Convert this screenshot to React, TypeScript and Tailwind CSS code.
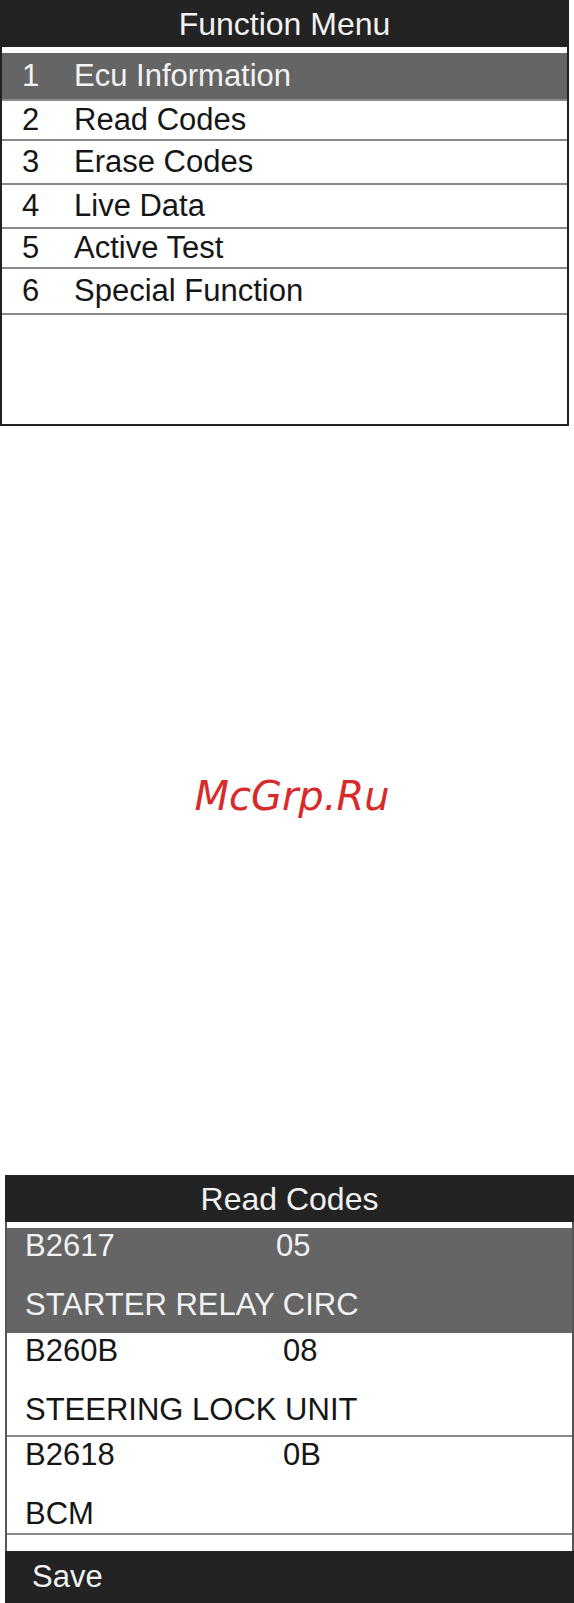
import React from 'react'

const menuItems = [
  { no: '1', label: 'Ecu Information', h: 'h-[46px]' },
  { no: '2', label: 'Read Codes', h: 'h-[40px]' },
  { no: '3', label: 'Erase Codes', h: 'h-[44px]' },
  { no: '4', label: 'Live Data', h: 'h-[44px]' },
  { no: '5', label: 'Active Test', h: 'h-[40px]' },
  { no: '6', label: 'Special Function', h: 'h-[46px]' },
]

const codes = [
  { code: 'B2617', status: '05', desc: 'STARTER RELAY CIRC', h: 'h-[105px]', statusPos: 'w-[251px]' },
  { code: 'B260B', status: '08', desc: 'STEERING LOCK UNIT', h: 'h-[104px]', statusPos: 'w-[258px]' },
  { code: 'B2618', status: '0B', desc: 'BCM', h: 'h-[98px]', statusPos: 'w-[258px]' },
]

function FunctionMenu() {
  return (
    <div className="w-[569px] h-[426px] flex flex-col bg-white border-x-2 border-b-2 border-[#222]">
      <div className="h-[47px] shrink-0 bg-[#232323] flex items-center justify-center text-[32px] text-[#f2f2f2]">
        Function Menu
      </div>
      <div className="h-[6px] shrink-0 bg-white" />
      {menuItems.map((item, i) => (
        <div
          key={item.no}
          className={`${item.h} shrink-0 flex items-center text-[31px] ${
            i === 0
              ? 'bg-[#656565] text-[#f2f2f2]'
              : 'bg-white text-[#161616] border-t-2 border-[#8a8a8a]'
          }`}
        >
          <span className="w-[72px] pl-[20px]">{item.no}</span>
          <span>{item.label}</span>
        </div>
      ))}
      <div className="flex-1 border-t-2 border-[#8a8a8a]" />
    </div>
  )
}

function ReadCodes() {
  return (
    <div className="ml-[5px] w-[569px] flex flex-col">
      <div className="h-[47px] bg-[#232323] flex items-center justify-center text-[32px] text-[#f2f2f2]">
        Read Codes
      </div>
      <div className="border-x-2 border-[#555] bg-white">
        <div className="h-[6px]" />
        {codes.map((c, i) => (
          <div
            key={c.code}
            className={`${c.h} pl-[18px] text-[31px] leading-[36px] ${
              i === 0
                ? 'bg-[#656565] text-[#f2f2f2]'
                : 'bg-white text-[#161616] border-b-2 border-[#8a8a8a]'
            }`}
          >
            <div className="flex h-[36px]">
              <span className={c.statusPos}>{c.code}</span>
              <span>{c.status}</span>
            </div>
            <div className="mt-[23px]">{c.desc}</div>
          </div>
        ))}
        <div className="h-[16px]" />
      </div>
      <div className="h-[52px] bg-[#232323] flex items-center pl-[27px] text-[31px] text-[#f2f2f2]">
        Save
      </div>
    </div>
  )
}

export default function App() {
  return (
    <div className="w-[574px] h-[1603px] bg-white overflow-hidden font-['Liberation_Sans',Arial,sans-serif]">
      <FunctionMenu />
      <div className="h-[749px] flex flex-col items-center">
        <div className="mt-[350px] ml-[10px] text-[40px] italic text-[#d92a2a] font-['DejaVu_Sans',sans-serif] leading-none">
          McGrp.Ru
        </div>
      </div>
      <ReadCodes />
    </div>
  )
}
